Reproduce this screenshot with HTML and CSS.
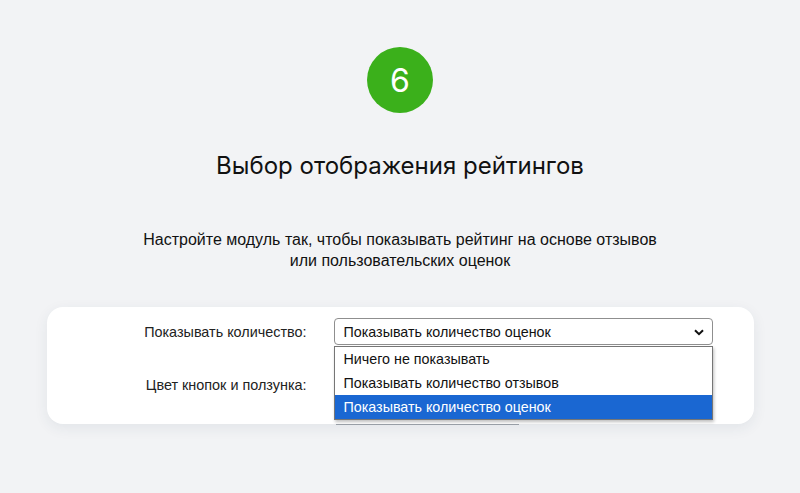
FILE: index.html
```html
<!DOCTYPE html>
<html lang="ru">
<head>
<meta charset="utf-8">
<link rel="stylesheet" href="styles.css">
</head>
<body>
<div class="page">
  <div class="step">6</div>
  <h1 class="title">Выбор отображения рейтингов</h1>
  <p class="lead">Настройте модуль так, чтобы показывать рейтинг на основе отзывов<br>или пользовательских оценок</p>
  <div class="card">
    <div class="row">
      <div class="label">Показывать количество:</div>
      <div class="control">
        <div class="select">
          <span>Показывать количество оценок</span>
          <svg class="chev" width="10" height="7" viewBox="0 0 10 7"><path d="M1 1.2 L5 5.2 L9 1.2" fill="none" stroke="#111" stroke-width="2"/></svg>
        </div>
        <div class="menu">
          <div class="opt">Ничего не показывать</div>
          <div class="opt">Показывать количество отзывов</div>
          <div class="opt sel">Показывать количество оценок</div>
        </div>
        <div class="peek"></div>
      </div>
    </div>
    <div class="row">
      <div class="label">Цвет кнопок и ползунка:</div>
      <div class="control"><div class="color"></div></div>
    </div>
  </div>
</div>
</body>
</html>
```
FILE: styles.css
```css
* { box-sizing: border-box; }
html, body { margin: 0; padding: 0; }
body {
  background: #f2f3f5;
  font-family: "Liberation Sans", Arial, sans-serif;
  color: #111;
  width: 800px;
  height: 493px;
  overflow: hidden;
}
.page {
  display: flex;
  flex-direction: column;
  align-items: center;
  padding-top: 47px;
}
.step {
  width: 66px;
  height: 66px;
  border-radius: 50%;
  background: #3bb01b;
  color: #fff;
  font-family: Inter, "Liberation Sans", sans-serif;
  font-size: 32px;
  display: flex;
  align-items: center;
  justify-content: center;
}
.title {
  margin: 39px 0 0;
  font-family: Inter, "Liberation Sans", sans-serif;
  font-weight: 400;
  font-size: 24px;
  line-height: 28px;
  color: #111;
}
.lead {
  margin: 49px 0 0;
  text-align: center;
  font-size: 16px;
  line-height: 21px;
  color: #111;
}
.card {
  margin-top: 36px;
  width: 707px;
  height: 117px;
  background: #fff;
  border-radius: 16px;
  box-shadow: 0 4px 14px rgba(40, 60, 90, 0.08);
  padding-top: 11px;
  display: flex;
  flex-direction: column;
  gap: 26px;
  position: relative;
}
.row {
  display: grid;
  grid-template-columns: 260px 379px;
  column-gap: 27px;
  align-items: center;
  height: 27px;
}
.label {
  text-align: right;
  font-size: 14.4px;
  color: #222;
}
.control { position: relative; height: 27px; }
.select {
  height: 27px;
  border: 1px solid #8f8f8f;
  border-radius: 4px;
  display: flex;
  align-items: center;
  justify-content: space-between;
  padding: 0 8px 0 9px;
  font-size: 14.3px;
  color: #111;
  background: #fff;
}
.chev { margin-top: 1px; }
.menu {
  position: absolute;
  left: 0;
  top: 28px;
  width: 379px;
  background: #fff;
  border: 1px solid #767676;
  box-shadow: 1px 2px 3px rgba(0,0,0,0.25);
  z-index: 3;
}
.opt {
  height: 24px;
  line-height: 24px;
  padding-left: 9px;
  font-size: 14.3px;
  color: #111;
}
.opt.sel { background: #1a67d2; color: #fff; }
.peek {
  position: absolute;
  left: 2px;
  top: 106px;
  width: 183px;
  height: 1px;
  background: #9aa0a8;
  z-index: 2;
}
.color {
  width: 183px;
  height: 27px;
}
```
